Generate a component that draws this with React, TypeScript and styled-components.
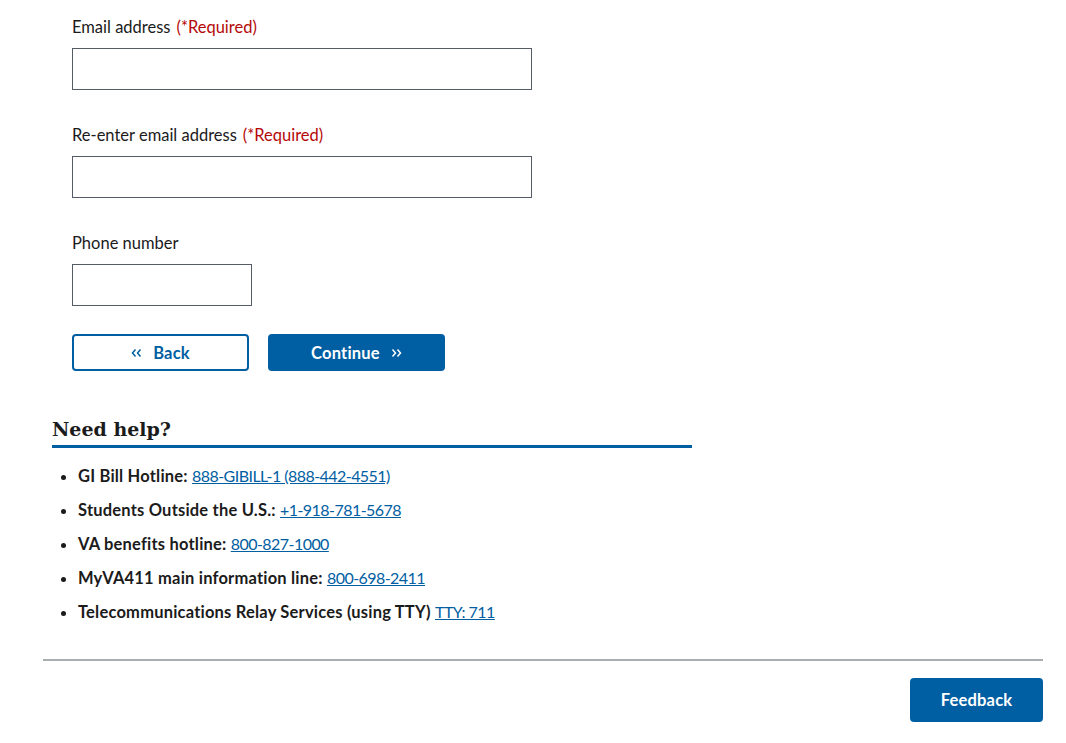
import React from "react";
import styled, { createGlobalStyle } from "styled-components";

const GlobalStyle = createGlobalStyle`
  body {
    margin: 0;
    background: #ffffff;
    font-family: "Lato", "Liberation Sans", sans-serif;
    color: #1b1b1b;
  }
`;

const Page = styled.div`
  width: 1000px;
  padding: 0 0 21px 43px;
`;

const Form = styled.form`
  padding: 16px 0 0 29px;
`;

const Field = styled.div`
  margin-bottom: 34px;
`;

const Label = styled.label`
  display: block;
  font-size: 16.5px;
  line-height: 21px;
  padding-top: 1px;
  margin-bottom: 10px;
`;

const Required = styled.span`
  color: #b50909;
  margin-left: 6px;
`;

const Input = styled.input<{ $width: number }>`
  display: block;
  box-sizing: border-box;
  width: ${(p) => p.$width}px;
  height: 42px;
  border: 1px solid #565c65;
  border-radius: 0;
  padding: 8px;
  font-size: 16px;
  font-family: inherit;
  margin: 0;
`;

const Actions = styled.div`
  display: flex;
  gap: 19px;
  margin-top: -6px;
`;

const Button = styled.button<{ $outline?: boolean }>`
  display: flex;
  align-items: center;
  justify-content: center;
  gap: 11px;
  box-sizing: border-box;
  width: 177px;
  height: 37px;
  border-radius: 4px;
  font-family: inherit;
  font-size: 16.5px;
  font-weight: 700;
  letter-spacing: 0.2px;
  cursor: pointer;
  background: ${(p) => (p.$outline ? "#ffffff" : "#005ea2")};
  color: ${(p) => (p.$outline ? "#005ea2" : "#ffffff")};
  border: ${(p) => (p.$outline ? "2px solid #005ea2" : "none")};
  padding: 0;
`;

const Help = styled.section`
  margin: 46px 0 0 9px;
  width: 640px;
`;

const HelpTitle = styled.h2`
  margin: 0;
  font-family: "DejaVu Serif", "Liberation Serif", serif;
  font-size: 19px;
  font-weight: 700;
  line-height: 24px;
  padding-bottom: 4px;
  border-bottom: 3px solid #005ea2;
`;

const HelpList = styled.ul`
  margin: 18px 0 0;
  padding-left: 26px;
`;

const HelpItem = styled.li`
  font-size: 16.5px;
  line-height: 21px;
  margin-bottom: 13px;
  &:last-child {
    margin-bottom: 0;
  }
`;

const Strong = styled.strong`
  font-weight: 700;
  letter-spacing: 0.2px;
`;

const PhoneLink = styled.a`
  color: #005ea2;
  font-size: 16px;
  line-height: 1;
  letter-spacing: -0.55px;
  text-decoration: underline;
`;

const Divider = styled.hr`
  margin: 36px 0 0;
  width: 1000px;
  border: none;
  border-top: 2px solid #a9aeb1;
`;

const Footer = styled.div`
  display: flex;
  justify-content: flex-end;
  padding-top: 17px;
`;

const FeedbackButton = styled.button`
  width: 133px;
  height: 44px;
  border: none;
  border-radius: 4px;
  background: #005ea2;
  color: #ffffff;
  font-family: inherit;
  font-size: 16.5px;
  font-weight: 700;
  letter-spacing: 0.2px;
  cursor: pointer;
`;

const Chevrons = ({ dir }: { dir: "left" | "right" }) => (
  <svg width="11" height="10" viewBox="0 0 11 10" aria-hidden="true">
    <g
      fill="none"
      stroke="currentColor"
      strokeWidth="1.5"
      transform={dir === "left" ? "" : "translate(11 0) scale(-1 1)"}
    >
      <path d="M4.5 1.5 L1.5 5 L4.5 8.5" />
      <path d="M9.5 1.5 L6.5 5 L9.5 8.5" />
    </g>
  </svg>
);

const helpLines = [
  { label: "GI Bill Hotline:", link: "888-GIBILL-1 (888-442-4551)" },
  { label: "Students Outside the U.S.:", link: "+1-918-781-5678" },
  { label: "VA benefits hotline:", link: "800-827-1000" },
  { label: "MyVA411 main information line:", link: "800-698-2411" },
  { label: "Telecommunications Relay Services (using TTY)", link: "TTY: 711" },
];

export default function App() {
  return (
    <Page>
      <GlobalStyle />
      <Form onSubmit={(e) => e.preventDefault()}>
        <Field>
          <Label>
            Email address<Required>(*Required)</Required>
          </Label>
          <Input type="email" $width={460} />
        </Field>
        <Field>
          <Label>
            Re-enter email address<Required>(*Required)</Required>
          </Label>
          <Input type="email" $width={460} />
        </Field>
        <Field>
          <Label>Phone number</Label>
          <Input type="tel" $width={180} />
        </Field>
        <Actions>
          <Button type="button" $outline>
            <Chevrons dir="left" />
            Back
          </Button>
          <Button type="submit">
            Continue
            <Chevrons dir="right" />
          </Button>
        </Actions>
      </Form>

      <Help>
        <HelpTitle>Need help?</HelpTitle>
        <HelpList>
          {helpLines.map((line) => (
            <HelpItem key={line.label}>
              <Strong>{line.label}</Strong> <PhoneLink href="#">{line.link}</PhoneLink>
            </HelpItem>
          ))}
        </HelpList>
      </Help>

      <Divider />
      <Footer>
        <FeedbackButton type="button">Feedback</FeedbackButton>
      </Footer>
    </Page>
  );
}
